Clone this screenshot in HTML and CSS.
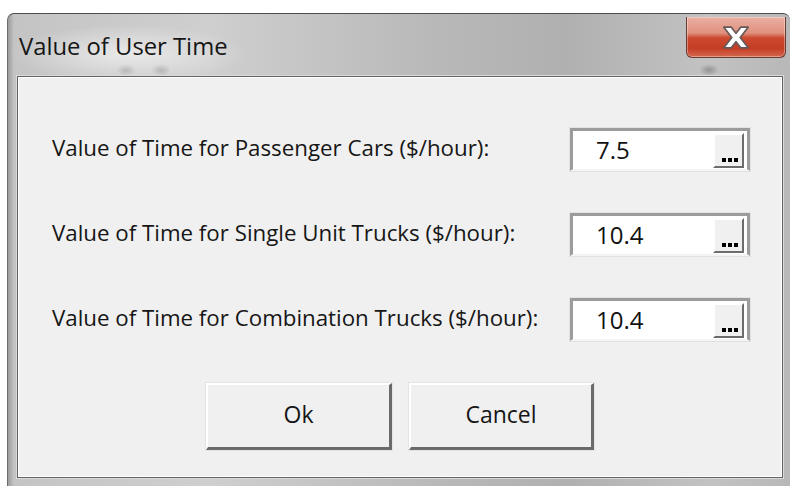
FILE: index.html
```html
<!DOCTYPE html>
<html lang="en">
<head>
<meta charset="utf-8">
<title>Value of User Time</title>
<link rel="stylesheet" href="styles.css">
</head>
<body>
<div class="window">
  <div class="titlebar">
    <span class="title">Value of User Time</span>
    <button class="close" aria-label="Close">
      <svg width="30" height="25" viewBox="0 0 32 26">
        <path d="M3 2 L11 2 L16 8.5 L21 2 L29 2 L20.5 13 L29 24 L21 24 L16 17.5 L11 24 L3 24 L11.5 13 Z" fill="#ffffff" stroke="#66585a" stroke-width="1.8" stroke-linejoin="round"/>
      </svg>
    </button>
  </div>
  <div class="client">
    <div class="rows">
      <label class="label">Value of Time for Passenger Cars ($/hour):</label>
      <div class="field"><span class="value">7.5</span><span class="dots"><i></i><i></i><i></i></span></div>
      <label class="label">Value of Time for Single Unit Trucks ($/hour):</label>
      <div class="field"><span class="value">10.4</span><span class="dots"><i></i><i></i><i></i></span></div>
      <label class="label">Value of Time for Combination Trucks ($/hour):</label>
      <div class="field"><span class="value">10.4</span><span class="dots"><i></i><i></i><i></i></span></div>
    </div>
    <div class="actions">
      <button class="btn btn-ok">Ok</button>
      <button class="btn btn-cancel">Cancel</button>
    </div>
  </div>
</div>
</body>
</html>
```

FILE: styles.css
```css
html, body {
  margin: 0;
  padding: 0;
  background: #ffffff;
}

body {
  font-family: "Open Sans", "Noto Sans", sans-serif;
  color: #111;
  overflow: hidden;
}

.window {
  margin: 13px 0 0 7px;
  width: 783px;
  height: 473px;
  box-sizing: border-box;
  border-radius: 7px 7px 0 0;
  border-top: 1px solid #4e4e4e;
  border-left: 1px solid #6c6c6c;
  background:
    radial-gradient(ellipse 170px 42px at 120px 40px, rgba(255,255,255,0.6), rgba(255,255,255,0) 70%),
    radial-gradient(ellipse 10px 6px at 118px 56px, rgba(60,60,60,0.3), rgba(60,60,60,0) 100%),
    radial-gradient(ellipse 10px 6px at 153px 56px, rgba(60,60,60,0.3), rgba(60,60,60,0) 100%),
    radial-gradient(ellipse 10px 6px at 701px 56px, rgba(60,60,60,0.35), rgba(60,60,60,0) 100%),
    linear-gradient(90deg, #9c9c9c 0px, #c4c4c4 6px, #cfcfcf 200px, #b9b9b9 420px, #b0b0b0 560px, #c2c2c2 700px, #b8b8b8 783px);
  display: flex;
  flex-direction: column;
}

.titlebar {
  height: 62px;
  display: flex;
  align-items: flex-start;
  padding-left: 11px;
  padding-right: 4px;
  box-sizing: border-box;
}

.title {
  margin-top: 16px;
  font-size: 23.8px;
  color: #161616;
}

.close {
  margin-left: auto;
  margin-top: 3px;
  width: 100px;
  height: 41px;
  padding: 0;
  border: 1px solid #6a3b33;
  border-top: none;
  border-radius: 0 0 6px 6px;
  background: linear-gradient(180deg, #eab0a2 0%, #e0907e 40%, #cc4a30 52%, #c43c24 78%, #d4684e 100%);
  box-shadow: inset 0 0 0 1px rgba(255,255,255,0.35);
  display: flex;
  align-items: center;
  justify-content: center;
}

.client {
  flex: 1;
  margin: 0 7px 8px 9px;
  background: #f0f0f0;
  border: 1px solid #646464;
  box-shadow: 0 0 0 1px #dadada, inset 0 0 0 1px #ffffff;
  display: flex;
  flex-direction: column;
  padding: 51px 0 0 34px;
}

.rows {
  display: grid;
  grid-template-columns: 518px 180px;
  grid-auto-rows: 43px;
  row-gap: 42px;
  align-items: center;
}

.label {
  font-size: 22.3px;
  color: #161616;
  padding-bottom: 4px;
  white-space: nowrap;
}

.field {
  height: 43px;
  box-sizing: border-box;
  background: #fff;
  border-top: 3px solid #9c9c9c;
  border-left: 3px solid #9c9c9c;
  border-right: 3px solid #9c9c9c;
  border-bottom: 2px solid #f4f4f4;
  box-shadow: 0 0 0 1px #e2e2e2;
  display: flex;
  align-items: stretch;
  padding: 2px 3px 1px 23px;
}

.value {
  flex: 1;
  font-size: 24px;
  line-height: 34px;
  color: #111;
}

.dots {
  width: 31px;
  box-sizing: border-box;
  background: #f0f0f0;
  border-top: 2px solid #ffffff;
  border-left: 2px solid #ffffff;
  border-right: 2px solid #6c6c6c;
  border-bottom: 2px solid #6c6c6c;
  display: flex;
  align-items: flex-end;
  justify-content: center;
  gap: 2px;
  padding: 0 0 4px 2px;
}

.dots i {
  width: 4px;
  height: 4px;
  background: #000;
}

.actions {
  display: flex;
  justify-content: center;
  gap: 17px;
  margin-top: 42px;
  margin-left: -34px;
}

.btn {
  height: 67px;
  box-sizing: border-box;
  background: #f0f0f0;
  border-top: 2px solid #ffffff;
  border-left: 2px solid #ffffff;
  border-right: 3px solid #6a6a6a;
  border-bottom: 3px solid #6a6a6a;
  box-shadow: 0 0 0 1px #e4e4e4;
  font-family: "Open Sans", "Noto Sans", sans-serif;
  font-size: 23px;
  color: #161616;
  padding: 0 0 4px 0;
}

.btn-ok { width: 186px; }
.btn-cancel { width: 185px; }
```
